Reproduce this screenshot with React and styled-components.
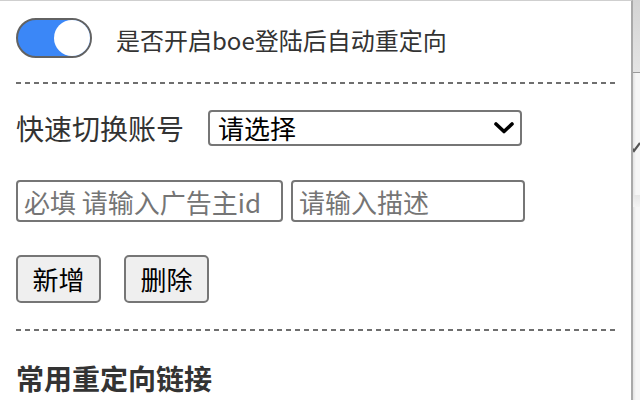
import React from "react";
import styled, { createGlobalStyle } from "styled-components";

const Global = createGlobalStyle`
  html, body { margin: 0; padding: 0; background: #ffffff; }
  body { font-family: "Noto Sans CJK SC", "Noto Sans", sans-serif; color: #333; }
  * { box-sizing: border-box; }
`;

const Page = styled.div`
  display: flex;
  width: 640px;
  height: 400px;
  overflow: hidden;
`;

const Panel = styled.div`
  width: 633px;
  flex: none;
  height: 400px;
  background: #fff;
  border-top: 1px solid #cfcfcf;
  border-right: 2px solid #a9a9a9;
  padding: 17px 15px 0 16px;
  display: flex;
  flex-direction: column;
`;

const Backdrop = styled.div`
  flex: 1;
  display: flex;
  flex-direction: column;
  background: linear-gradient(to right, #e2e2e2, #f6f6f6 3px);
  overflow: hidden;
`;

const BackHeader = styled.div`
  height: 73px;
  background: linear-gradient(to bottom, #d4d4d4, #e4e4e4);
  border-bottom: 1px solid #9a9a9a;
  flex: none;
`;

const BackChevron = styled.div`
  margin-top: 62px;
  height: 12px;
  margin-left: -6px;
  flex: none;
`;

const BackBand = styled.div`
  margin-top: 48px;
  height: 12px;
  background: linear-gradient(to bottom, #e6e6e6, #f3f3f3);
  flex: none;
`;

const SwitchRow = styled.div`
  display: flex;
  align-items: center;
  gap: 24px;
  height: 40px;
`;

const Track = styled.div`
  width: 76px;
  height: 40px;
  border: 2px solid #626262;
  border-radius: 20px;
  background: ${(p) => (p.$on ? "#3b87f7" : "#e5e5e5")};
  display: flex;
  justify-content: ${(p) => (p.$on ? "flex-end" : "flex-start")};
  align-items: center;
  flex: none;
`;

const Knob = styled.div`
  width: 36px;
  height: 36px;
  border-radius: 50%;
  background: #fff;
`;

const SwitchText = styled.span`
  font-size: 24px;
  line-height: 40px;
  color: #333;
  padding-top: 4px;
`;

const Divider = styled.div`
  height: 2px;
  width: 600px;
  margin-top: ${(p) => p.$top}px;
  background: repeating-linear-gradient(to right, #6f6f6f 0 5px, transparent 5px 9px);
  flex: none;
`;

const AccountRow = styled.div`
  display: flex;
  align-items: center;
  gap: 24px;
  margin-top: 26px;
  height: 36px;
`;

const Label = styled.span`
  font-size: 28px;
  line-height: 36px;
  color: #333;
`;

const SelectWrap = styled.div`
  position: relative;
  width: 314px;
  height: 36px;
`;

const Select = styled.select`
  appearance: none;
  width: 100%;
  height: 100%;
  border: 2px solid #767676;
  border-radius: 4px;
  background: #fff;
  font-family: "Noto Sans CJK SC", "Noto Sans", sans-serif;
  font-size: 26px;
  color: #000;
  padding: 0 0 0 8px;
  line-height: 32px;
  outline: none;
`;

const SelectArrow = styled.svg`
  position: absolute;
  right: 8px;
  top: 12px;
  pointer-events: none;
`;

const InputRow = styled.div`
  display: flex;
  gap: 8px;
  margin-top: 34px;
`;

const Input = styled.input`
  width: ${(p) => p.$w}px;
  height: 42px;
  border: 2px solid #767676;
  border-radius: 4px;
  padding: 0 6px;
  font-family: "Noto Sans CJK SC", "Noto Sans", sans-serif;
  font-size: 26px;
  color: #000;
  outline: none;
  &::placeholder { color: #757575; }
`;

const ButtonRow = styled.div`
  display: flex;
  gap: 23px;
  margin-top: 33px;
`;

const Button = styled.button`
  height: 48px;
  width: ${(p) => p.$w}px;
  padding: 0;
  background: #efefef;
  border: 2px solid #767676;
  border-radius: 5px;
  font-family: "Noto Sans CJK SC", "Noto Sans", sans-serif;
  font-size: 26px;
  color: #000;
  line-height: 44px;
`;

const Heading = styled.h3`
  margin: 30px 0 0 0;
  font-size: 28px;
  font-weight: 700;
  line-height: 34px;
  color: #333;
`;

export default function App() {
  return (
    <>
      <Global />
      <Page>
        <Panel>
          <SwitchRow>
            <Track $on>
              <Knob />
            </Track>
            <SwitchText>是否开启boe登陆后自动重定向</SwitchText>
          </SwitchRow>
          <Divider $top={24} />
          <AccountRow>
            <Label>快速切换账号</Label>
            <SelectWrap>
              <Select defaultValue="">
                <option value="">请选择</option>
              </Select>
              <SelectArrow width="20" height="12" viewBox="0 0 20 12">
                <path d="M2 2 L10 9.5 L18 2" fill="none" stroke="#000" strokeWidth="3.6" strokeLinecap="round" strokeLinejoin="round" />
              </SelectArrow>
            </SelectWrap>
          </AccountRow>
          <InputRow>
            <Input $w={267} placeholder="必填 请输入广告主id" />
            <Input $w={234} placeholder="请输入描述" />
          </InputRow>
          <ButtonRow>
            <Button $w={85}>新增</Button>
            <Button $w={85}>删除</Button>
          </ButtonRow>
          <Divider $top={26} />
          <Heading>常用重定向链接</Heading>
        </Panel>
        <Backdrop>
          <BackHeader />
          <BackChevron>
            <svg width="14" height="12" viewBox="0 0 14 12">
              <path d="M1 1 L7 9 L13 1" fill="none" stroke="#555" strokeWidth="2.2" />
            </svg>
          </BackChevron>
          <BackBand />
        </Backdrop>
      </Page>
    </>
  );
}
